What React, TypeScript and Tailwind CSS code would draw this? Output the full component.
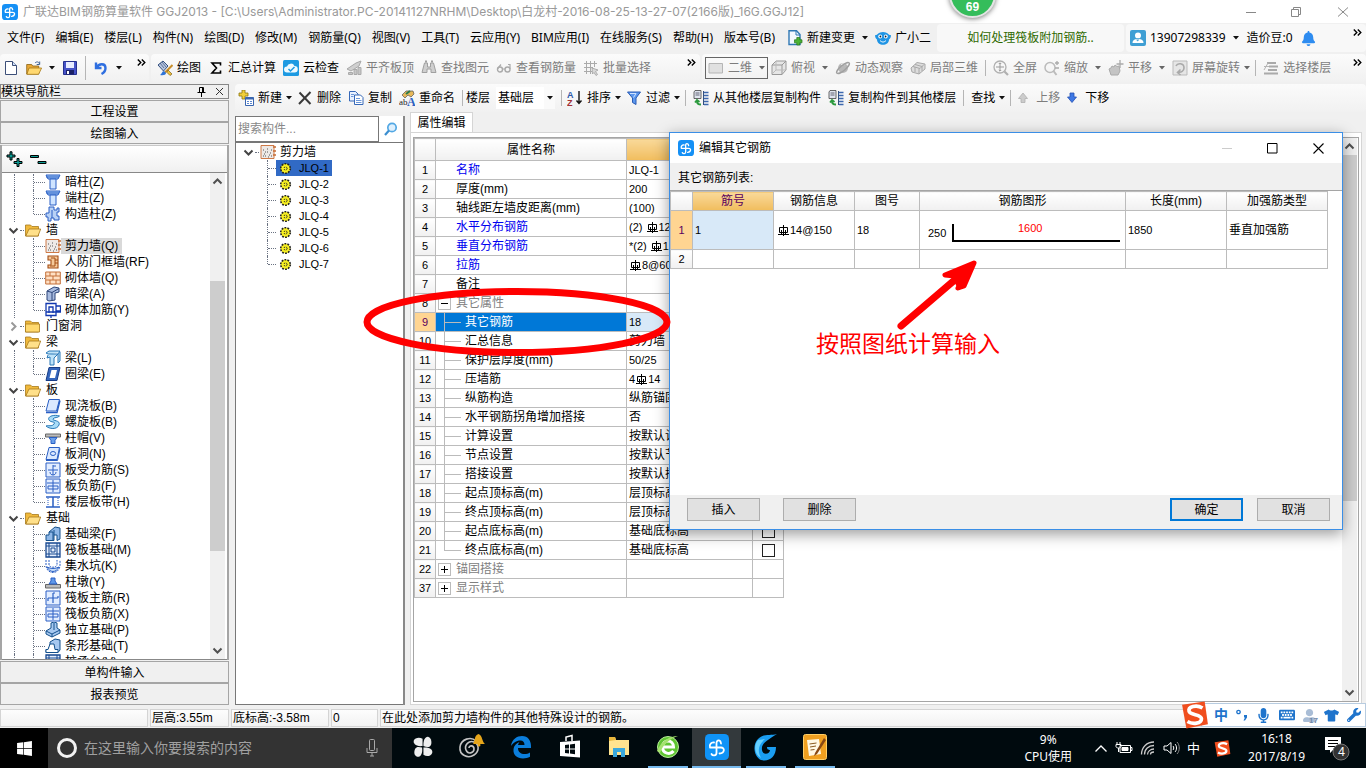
import React from "react";
import { FaBell, FaEdge, FaKeyboard, FaMicrophone, FaTshirt, FaWindows, FaWrench, FaUserAlt } from "react-icons/fa";

type P = { children?: React.ReactNode };

/* ---------- small glyphs ---------- */

const Caret = ({ c = "#111" }: { c?: string }) => (
  <svg width="6" height="4" viewBox="0 0 6 4" className="shrink-0"><path d="M0 0h6L3 3.6z" fill={c} /></svg>
);
const More = () => (
  <svg width="9" height="7" viewBox="0 0 9 7" className="mb-3 shrink-0" fill="none" stroke="#000" strokeWidth="1.4"><path d="M.8.5l3 3-3 3M4.8.5l3 3-3 3" /></svg>
);
const Chevron = ({ open = true }: { open?: boolean }) => (
  <svg width="11" height="11" viewBox="0 0 11 11" className="shrink-0" fill="none" stroke={open ? "#444" : "#999"} strokeWidth="2">
    {open ? <path d="M1.5 3.5l4 4 4-4" /> : <path d="M3.5 1.5l4 4-4 4" />}
  </svg>
);
const ScrollArrow = ({ up = false }: { up?: boolean }) => (
  <svg width="15" height="17" viewBox="0 0 15 17" fill="none" stroke="#505050" strokeWidth="2" className="shrink-0">
    {up ? <path d="M3.5 10.5l4-4 4 4" /> : <path d="M3.5 6.5l4 4 4-4" />}
  </svg>
);
const Rebar = () => (
  <svg width="13" height="11" viewBox="0 0 13 11" className="inline-block shrink-0 align-[-2px]" fill="none" stroke="#000" strokeWidth="1">
    <path d="M6.500 0v11M2.500 2.500h8v5h-8zM1 9.500h11M4.500 5v4M8.500 5v4" />
  </svg>
);
const LogoMark = ({ w }: { w: number }) => (
  <path d="M16 8.500c-.5-4-4.500-4-4.500-.5v10c0 3-4 3-5 1M5 12.500h11c4 0 4 5.500-1.500 6M5 12.500c-1-3 1.500-5.500 4-5" fill="none" stroke="#fff" strokeWidth={w} strokeLinecap="round" />
);
const AppLogo = () => (
  <svg width="16" height="16" viewBox="0 0 24 24" className="shrink-0">
    <rect width="24" height="24" rx="5" fill="#1590f5" />
    <LogoMark w={2} />
  </svg>
);

/* ---------- toolbar icons ---------- */

const Svg = ({ children, w = 16 }: P & { w?: number }) => (
  <svg width={w} height={w} viewBox="0 0 16 16" fill="none" className="shrink-0">{children}</svg>
);
const NewFile = () => <Svg><path d="M2.500 1.500h7l4 4v9h-11z" fill="#fff" stroke="#3c4f78" /><path d="M9.500 1.500v4h4" stroke="#3c4f78" fill="#cfe0fa" /></Svg>;
const OpenFile = () => <Svg><path d="M.7 4.500h5l1 1.500h6v8H.7z" fill="#e8a735" stroke="#8a6212" strokeWidth=".8" /><path d="M3 8h12.600l-3 6.300H.9z" fill="#ffd870" stroke="#a67817" strokeWidth=".8" /><path d="M9 3c2-2 4-1 4.500 1M13.700 1.500v3h-3" stroke="#3d6296" /></Svg>;
const Save = () => <Svg><path d="M1.500 1.500h13v13h-13z" fill="#4653c8" stroke="#26308e" /><path d="M4 2h8v6H4z" fill="#e8ecff" /><path d="M4 10h8v4.500H4z" fill="#1b2268" /><path d="M5 11h2v3H5z" fill="#fff" /></Svg>;
const Undo = () => <Svg><path d="M3 2.500v5.500h5.500M3.500 7.500C6 3 12.500 3 12.500 8c0 3-2 5-4 6" stroke="#2f6fe0" strokeWidth="2.400" /></Svg>;
const Paint = () => <Svg><path d="M1 5l5-4 5 5-4.500 5z" fill="#b7c4de" stroke="#34507e" /><path d="M3 3l4 5M5 2l4 5" stroke="#34507e" strokeWidth=".7" /><path d="M15.500 5L8 12.500" stroke="#c88e2c" strokeWidth="2" /><path d="M7 11c-2 0-2 3-4 4 3 .6 6 0 6-2z" fill="#2e74d8" /><path d="M11 10l4 4-2 1.500-3-3z" fill="#f0c23c" stroke="#80601a" strokeWidth=".7" /></Svg>;
const Sigma = () => <Svg><path d="M12.500 5.500V3H4l4.500 5L4 13h8.500v-2.500" stroke="#000" strokeWidth="1.600" /></Svg>;
const Cloud = () => <Svg><rect width="16" height="16" rx="1.500" fill="#1d9ae2" /><path d="M4 12.500a3 3 0 010-6 4 4 0 017.500-.5 3.200 3.200 0 010 6.500z" fill="#eefaff" /><path d="M5.500 9l2 2 4-4" stroke="#1d9ae2" strokeWidth="1.500" /></Svg>;
const AlignTop = () => <Svg><path d="M1 9l9-6 5-2-2 5-8 5z" fill="#d0d0d0" stroke="#a8a8a8" /><path d="M2.500 12.500h4v2h-4zM8 9.500h3v5H8zM12 7.500h3v7h-3z" fill="#c6c6c6" stroke="#aaa" /></Svg>;
const Binoc = () => <Svg><path d="M3.500 3h3v4h3V3h3l2.500 9.500h-5V9H6v3.500H1z" fill="#cfcfcf" stroke="#a0a0a0" /><path d="M4 1.500h2M10 1.500h2" stroke="#a0a0a0" strokeWidth="2" /></Svg>;
const Glasses = () => <Svg><circle cx="4" cy="9.500" r="2.500" stroke="#aaa" strokeWidth="1.400" /><circle cx="11.500" cy="9.500" r="2.500" stroke="#aaa" strokeWidth="1.400" /><path d="M6.500 9H9M1.700 8.500L5 4.500M14 9V4.500h-2" stroke="#aaa" strokeWidth="1.200" /></Svg>;
const Batch = () => <Svg><path d="M1 3.500h13M1 7.500h9M1 11.500h8M3.500 1v13M7.500 1v13M11.500 1v6" stroke="#aaa" /><path d="M9 8l6 2-2.500 1.500 2 3-1.500 1-2-3L9.500 14z" fill="#d8d8d8" stroke="#a0a0a0" strokeWidth=".8" /></Svg>;
const Plane2D = () => <Svg><path d="M1 3.500h13.500v9.500H1z" fill="#e0e0e0" stroke="#b5b5b5" /></Svg>;
const Cube = () => <Svg><path d="M1 5l4-4h10v9l-4 4.500H1zM1 5h10v9.500M11 5l4-4" fill="#e6e6e6" stroke="#999" /><path d="M5 1v9h10M5 10l-4 4" stroke="#bbb" /></Svg>;
const Orbit = () => <Svg><circle cx="8" cy="8" r="5" fill="#b8b8b8" /><path d="M6 4.500a4 4 0 014 0" stroke="#eee" strokeWidth="1.500" /><ellipse cx="8" cy="8" rx="8" ry="2.500" transform="rotate(-40 8 8)" stroke="#a0a0a0" strokeWidth="1.400" /></Svg>;
const Local3D = () => <Svg><path d="M1 8l6-5.500 8 1.500v5l-6 5-7-2z" fill="#ddd" stroke="#a8a8a8" /><path d="M3 6.500l7 2 4-4M5 4.500l7 2M9 14V8.500M5 12l0-5M12 11V6" stroke="#a8a8a8" /></Svg>;
const FullView = () => <Svg><circle cx="7" cy="7" r="6" stroke="#b0b0b0" strokeWidth="1.300" /><path d="M7 3v8M3 7h8M5.800 4L7 2.800 8.200 4M5.800 10L7 11.200 8.200 10" stroke="#999" /><path d="M11.500 11.500L15 15" stroke="#b0b0b0" strokeWidth="2.200" /></Svg>;
const Zoom = () => <Svg><circle cx="6" cy="7.500" r="5" stroke="#bbb" strokeWidth="1.500" /><path d="M9.500 11l3 4" stroke="#bbb" strokeWidth="2" /><path d="M13 1v4M11 3h4M11 8h4" stroke="#aaa" strokeWidth="1.300" /></Svg>;
const Pan = () => <Svg><path d="M3 15l-2-6 2-1 1-2 2 1 1-2 2 1.500L11 6l1 5-2 4z" fill="#c4c4c4" stroke="#aaa" /><path d="M12 0v8M8.500 4h7" stroke="#aaa" strokeWidth="1.300" /></Svg>;
const Rotate = () => <Svg><path d="M1 1h14v14H1z" fill="#e6e6e6" stroke="#bbb" /><path d="M4 6c1.500-3.500 8-3 8 2 0 3-3 4.500-5.500 4M8.500 9.500l-3 3 3 2.500" stroke="#aaa" strokeWidth="1.600" /></Svg>;
const PickFloor = () => <Svg><path d="M4 3h9M6 6.500h9M5 10h9M1 13.500h14" stroke="#aaa" strokeWidth="1.800" /><path d="M1 6.500h5M1 10l4-7" stroke="#b5b5b5" /></Svg>;
const NewComp = () => <Svg><path d="M4 0h3v3h3v3H7v3H4V6H1V3h3z" fill="#f0cf3a" stroke="#8a7410" strokeWidth=".8" /><path d="M7.500 7.500h8v8h-8z" fill="#fff" stroke="#3a66b0" /><path d="M7.500 8.500h8" stroke="#3a66b0" strokeWidth="2" /><path d="M9 11.500h2M12 11.500h2M9 13.500h2M12 13.500h2" stroke="#5a86d0" /></Svg>;
const Cross = () => <Svg><path d="M2.500 2.500l11 11.500M13.500 2l-11.500 12" stroke="#3a3a3a" strokeWidth="2" /></Svg>;
const Copy = () => <Svg><path d="M1.500 1.500h6l2.500 2.500v7H1.500z" fill="#eaf2ff" stroke="#3769b8" /><path d="M6.500 5h6l2.500 2.500v7H6.500z" fill="#fff" stroke="#3769b8" /><path d="M8 8.500h4M8 10.500h5.500M8 12.500h5.500M3 4.500h3M3 6.500h2.500" stroke="#6b97da" /></Svg>;
const Rename = () => (
  <svg width="16" height="16" viewBox="0 0 16 16" className="shrink-0"><path d="M3 5l4-4h7l1 3-3 3-3-2-3 3z" fill="#e7b85a" stroke="#555" strokeWidth=".7" /><path d="M7 4l4-3" stroke="#2c7a4a" strokeWidth="2" /><text x="0" y="15" fontSize="9" fontFamily="Liberation Serif" fill="#222">ab</text><text x="8" y="15.500" fontSize="12" fontWeight="bold" fontFamily="Liberation Serif" fill="#2b60c0">A</text></svg>
);
const SortAZ = () => (
  <svg width="16" height="16" viewBox="0 0 16 16" className="shrink-0"><text x="0" y="7.500" fontSize="9" fontWeight="bold" fontFamily="Liberation Sans" fill="#2c57a8">A</text><text x="0" y="15.500" fontSize="9" fontWeight="bold" fontFamily="Liberation Sans" fill="#a02f34">Z</text><path d="M12 1v12M9.500 10.500l2.500 3 2.500-3" stroke="#111" strokeWidth="1.400" fill="none" /></svg>
);
const Filter = () => <Svg><path d="M1.500 2h13L10 8v6.500l-3.500-2V8z" fill="#5b97ee" stroke="#2a5bb4" /><path d="M4 3.500h6l-2.500 4" stroke="#cfe2ff" /></Svg>;
const FloorCopy = () => <Svg><path d="M2 .5h6v8H1V2z" fill="#dfe4ee" stroke="#444" strokeWidth=".8" /><path d="M2.500 3h4M2.500 5h4" stroke="#445" strokeWidth=".8" /><path d="M11 2.500h4.500M11 5.500h4.500M11 8.500h4.500M11 11.500h4.500M11 14.500h4.500" stroke="#3d68ae" strokeWidth="1.400" /><path d="M10.500 1v14" stroke="#33507e" /><path d="M8 14.500c-3 0-4-1-4-3M2 12.500l2-2.500 2.500 2" stroke="#2c9a3e" strokeWidth="1.800" /></Svg>;
const Arrow = ({ down = false }: { down?: boolean }) => (
  <svg width="10" height="12" viewBox="0 0 10 12" className="shrink-0">
    {down ? <path d="M3 1h4v4h2.500L5 10.500.5 5H3z" fill="#3e78e4" stroke="#2550b4" strokeWidth=".8" /> : <path d="M3 10.500h4v-4h2.500L5 1 .5 6.500H3z" fill="#ccc" stroke="#b0b0b0" strokeWidth=".8" />}
  </svg>
);
const ChangeDoc = () => <Svg><path d="M2 .8h7.500L13 4.500v10H2z" fill="#f3f9ff" stroke="#2f78b4" strokeWidth="1.400" /><path d="M9 1v4h4" stroke="#2f78b4" /><path d="M9.800 7.500h3v2.300H15v3h-2.200V15h-3v-2.200H7.500v-3h2.300z" fill="#4cb434" stroke="#23741a" strokeWidth=".7" /></Svg>;
const Owl = () => <Svg><path d="M0 5c2 1 3-3 8-3s6 4 8 3c0 3-1.500 4-2 4.500 0 7-12 7-12 0C1.500 9 0 8 0 5z" fill="#1f94e4" /><circle cx="5.200" cy="6.500" r="1.900" fill="#fff" /><circle cx="10.800" cy="6.500" r="1.900" fill="#fff" /><circle cx="5.400" cy="6.500" r=".9" fill="#123" /><circle cx="10.600" cy="6.500" r=".9" fill="#123" /><path d="M5 10.500c2 2 4 2 6 0" stroke="#fff" /></Svg>;
const UserTile = () => <Svg><rect width="16" height="16" rx="2" fill="#3f9fd4" /><circle cx="8" cy="5.500" r="3" fill="#fff" /><path d="M2.500 13c0-3.500 3-4 5.500-4s5.500.5 5.500 4z" fill="#fff" /><path d="M8 8v3l-1.500-1" stroke="#3f9fd4" /></Svg>;

/* ---------- tree icons ---------- */

const Folder = ({ open = true }: { open?: boolean }) => (
  <svg width="16" height="14" viewBox="0 0 16 14" className="shrink-0">
    <path d="M.5 2h5l1.500 1.500h6.500V13H.5z" fill="#f0b93c" stroke="#a77a1c" strokeWidth=".8" />
    {open ? <path d="M4 6h11.700L13 13H.8z" fill="#ffe08a" stroke="#a77a1c" strokeWidth=".8" /> : <path d="M.5 5h14v8H.5z" fill="#ffd96f" stroke="#a77a1c" strokeWidth=".8" />}
  </svg>
);
const WallIcon = () => (
  <Svg><path d="M1 1.500h13v13H1z" fill="#eee9e6" stroke="#c86c34" strokeWidth=".9" /><path d="M4 10h1M7 8h1M5 12h1M9 11h1M11 6h1M10 9h1M3 12h1M8 13h1M7 5h1M11 12h1M3 6h1M5 8h1" stroke="#555" /><path d="M13 3h3M13 7h3M13 11h3" stroke="#c86c34" strokeWidth="1.500" /></Svg>
);
const blue = "#2a5fc4";
const nodeIcons: Record<string, React.ReactNode> = {
  col: <Svg><path d="M1 1h14l-2 4H3z" fill="#9cc4f4" stroke={blue} /><path d="M5 5h6v10H5z" fill="#cfe4ff" stroke={blue} /><path d="M1 3h13" stroke={blue} /></Svg>,
  ccol: <Svg><path d="M4 1h5v3h3V2h2v4h-2v4h2v4H9v-2H6v3H3v-4H1V7h3z" fill="#b9d2f6" stroke={blue} /><path d="M7 4v8" stroke={blue} /></Svg>,
  wall: <WallIcon />,
  door: <Svg><path d="M3 2h10v12H3v-3h3V6H3z" fill="#f5c99a" stroke="#a34c14" strokeWidth="1.100" /><path d="M6 4h4v8H5M10 6h3M10 9h3" stroke="#a34c14" /></Svg>,
  brick: <Svg><path d="M.7 2h14.600v12H.7z" fill="#ffe0c4" stroke="#c4713a" /><path d="M1 6h14M1 10h14M5 2v4M11 2v4M8 6v4M5 10v4M11 10v4" stroke="#c4713a" /></Svg>,
  hbeam: <Svg><path d="M2 5l7-4 5 1v4l-4 1v7l-6 1-2-1z" fill="#a9bce0" stroke="#2c4478" /><path d="M2 5l5 1.500 7-4M7 6.500V14" stroke="#2c4478" /></Svg>,
  brebar: <Svg><path d="M1 1.500h10v12H1zM11 4h4.500v5H11M4 11V5h4v6M1 10h15M6 13v3" stroke="#1238b0" strokeWidth="1.300" /></Svg>,
  beam: <Svg><path d="M1 3l3-2h11l-2 3H3zM3 5l-1 3 3-1v8h4V8l4-4v9l2-2V2" fill="#bfe3f8" stroke="#2a78b8" /></Svg>,
  ring: <Svg><path d="M4 1.500h11l-3 13H1z" fill="#3566bc" stroke="#173c86" /><path d="M6.500 4h5.500l-2 8H4.500z" fill="#fff" /></Svg>,
  slab: <Svg><path d="M4 1.500h10.500l-3 11.500H1z" fill="#dbe9ff" stroke={blue} /><path d="M1 14.500h11l3-12" stroke={blue} strokeWidth="1.400" /></Svg>,
  spiral: <Svg><path d="M14.500 2C8 0 2 3 4 6s7 1 5 4-6 1-8 2c3 3 11 4 13-1s-7-4-6-6 5-1 6.500-3z" fill="#a8dcf8" stroke="#2878b8" /></Svg>,
  cap: <Svg><path d="M.5 4h15v3H.5z" fill="#bbb" stroke="#666" /><path d="M4 7.500h8l-2 3v3H6v-3z" fill="#6ba0ea" stroke={blue} /></Svg>,
  hole: <Svg><path d="M4 1.500h10.500l-2.500 12H1z" fill="#dbe9ff" stroke={blue} /><path d="M1 14.500h11.500l2.500-12" stroke={blue} /><ellipse cx="8" cy="7.500" rx="2.600" ry="2" stroke={blue} /></Svg>,
  srebar: <Svg><path d="M1 1h14v14H1z" fill="#e2edff" stroke={blue} /><path d="M8 3v10M3 8h10M8 4h3M11 10c0 4-6 4-6 0" stroke={blue} /></Svg>,
  nrebar: <Svg><path d="M1 1h14v14H1z" fill="#e2edff" stroke={blue} /><path d="M8 2v12M2 5h12M3 11V8h10v3M3 11h10" stroke={blue} /></Svg>,
  strip: <Svg><path d="M1 3h14M1 13h14M8 3v10" stroke={blue} strokeWidth="1.500" /><path d="M3 4v8M13 4v8" stroke={blue} strokeDasharray="1 1" /></Svg>,
  fbeam: <Svg><path d="M1 14.500V9h3V6l6-5 5 1v11l-3 1.500V9H9v5.500z" fill="#8fb8e8" stroke="#14508c" /><path d="M4 6h4v8M9 4v5" stroke="#14508c" /></Svg>,
  raft: <Svg><path d="M1 1h14v14H1z" fill="#e4eefc" stroke="#174890" strokeWidth="1.300" /><path d="M4 1v14M12 1v14M1 4h14M1 12h14M6 6h4v4H6z" stroke="#174890" /></Svg>,
  pit: <Svg><path d="M1 2v5c0 10 14 10 14 0V2M4 2v5c1 3 7 3 8 0V2" stroke={blue} strokeDasharray="2 1" /><path d="M2 9c3 6 9 6 12 0-4 2-8 2-12 0z" fill="#c4dcf8" stroke={blue} /></Svg>,
  pier: <Svg><path d="M.5 10.500h15v3.500H.5z" fill="#bbb" stroke="#666" /><path d="M4 10h8l-2-3V4H6v3z" fill="#5f98e8" stroke={blue} /></Svg>,
  mrebar: <Svg><path d="M1 1h14v14H1z" fill="#e2edff" stroke={blue} /><path d="M8 3v10M3 8h10M8 3h2M3 8v3M13 8V6" stroke={blue} strokeWidth="1.200" /></Svg>,
  indep: <Svg><path d="M1 9l5-3V1l3-1 3 1v5l3 2v3l-8 4-6-3z" fill="#a6c8f0" stroke="#14508c" /><path d="M1 9l6 3 8-4M9 1v7M7 12v3" stroke="#14508c" /></Svg>,
  bar: <Svg><path d="M1 14.500v-3h2l2-4V4l5-3 5 1v10l-2 2.500z" fill="#a6c8f0" stroke="#14508c" /><path d="M5 6h4l1 5.500h3v3H1v-3h2z" fill="#fff" stroke="#14508c" /></Svg>,
};

type Node = { t: string; icon?: string; closed?: boolean; last?: boolean; sel?: boolean };
const navNodes: Node[] = [
  { t: "暗柱(Z)", icon: "col" }, { t: "端柱(Z)", icon: "col" }, { t: "构造柱(Z)", icon: "ccol", last: true },
  { t: "墙" },
  { t: "剪力墙(Q)", icon: "wall", sel: true }, { t: "人防门框墙(RF)", icon: "door" }, { t: "砌体墙(Q)", icon: "brick" }, { t: "暗梁(A)", icon: "hbeam" }, { t: "砌体加筋(Y)", icon: "brebar", last: true },
  { t: "门窗洞", closed: true },
  { t: "梁" },
  { t: "梁(L)", icon: "beam" }, { t: "圈梁(E)", icon: "ring", last: true },
  { t: "板" },
  { t: "现浇板(B)", icon: "slab" }, { t: "螺旋板(B)", icon: "spiral" }, { t: "柱帽(V)", icon: "cap" }, { t: "板洞(N)", icon: "hole" }, { t: "板受力筋(S)", icon: "srebar" }, { t: "板负筋(F)", icon: "nrebar" }, { t: "楼层板带(H)", icon: "strip", last: true },
  { t: "基础" },
  { t: "基础梁(F)", icon: "fbeam" }, { t: "筏板基础(M)", icon: "raft" }, { t: "集水坑(K)", icon: "pit" }, { t: "柱墩(Y)", icon: "pier" }, { t: "筏板主筋(R)", icon: "mrebar" }, { t: "筏板负筋(X)", icon: "nrebar" }, { t: "独立基础(P)", icon: "indep" }, { t: "条形基础(T)", icon: "bar" }, { t: "桩承台(V)", icon: "raft" },
];

const NavRow = ({ n }: { n: Node }) =>
  n.icon ? (
    <li className="flex h-4 items-center leading-4">
      <span className="ml-3 h-4 w-px border-l border-dotted border-gray-500" />
      <span className={n.last ? "ml-[18px] h-2 w-px self-start border-l border-dotted border-gray-500" : "ml-[18px] h-4 w-px border-l border-dotted border-gray-500"} />
      <span className="w-[11px] border-t border-dotted border-gray-500" />
      {nodeIcons[n.icon]}
      <span className={n.sel ? "bg-[#d9d9d9] px-1" : "px-1"}>{n.t}</span>
    </li>
  ) : (
    <li className="flex h-4 items-center leading-4">
      <span className="ml-[6px] flex"><Chevron open={!n.closed} /></span>
      <span className="mx-px w-[4px] border-t border-dotted border-gray-500" />
      <Folder open={!n.closed} />
      <span className="ml-[5px]">{n.t}</span>
    </li>
  );

/* ---------- toolbar pieces ---------- */

const Bar = ({ children, grow = false }: P & { grow?: boolean }) => (
  <div className={grow ? "flex h-[28px] min-w-0 flex-1 items-center gap-[7px] rounded-sm bg-gradient-to-b from-[#fbfbfb] to-[#f1f1f1] px-[3px]" : "flex h-[28px] shrink-0 items-center gap-[7px] rounded-sm bg-gradient-to-b from-[#fbfbfb] to-[#f1f1f1] px-[3px]"}>{children}</div>
);
const Sep = () => <span className="h-4 w-px shrink-0 bg-[#b5b5b5]" />;
const Tool = ({ icon, t, off = false, caret, label, wide = false }: { icon?: React.ReactNode; t?: string; off?: boolean; caret?: "near" | "far"; label?: string; wide?: boolean }) => (
  <button type="button" aria-label={label} className={off ? "flex shrink-0 items-center gap-1 whitespace-nowrap text-[#7d7d7d]" : "flex shrink-0 items-center gap-1 whitespace-nowrap text-black"}>
    {icon}
    {t && <span className={wide ? "ml-1" : ""}>{t}</span>}
    {caret && <span className={caret === "far" ? "ml-[3px]" : "-mr-[2px]"}><Caret c={off ? "#666" : "#111"} /></span>}
  </button>
);

const menus = ["文件(F)", "编辑(E)", "楼层(L)", "构件(N)", "绘图(D)", "修改(M)", "钢筋量(Q)", "视图(V)", "工具(T)", "云应用(Y)", "BIM应用(I)", "在线服务(S)", "帮助(H)", "版本号(B)"];

/* ---------- property grid ---------- */

type Prop = { n: number; t: string; v?: React.ReactNode; kind: "top" | "key" | "group" | "leaf"; sel?: boolean; open?: boolean; check?: boolean; last?: boolean };
const props: Prop[] = [
  { n: 1, t: "名称", v: "JLQ-1", kind: "key" },
  { n: 2, t: "厚度(mm)", v: "200", kind: "top" },
  { n: 3, t: "轴线距左墙皮距离(mm)", v: "(100)", kind: "top" },
  { n: 4, t: "水平分布钢筋", v: <>(2) <Rebar />12</>, kind: "key" },
  { n: 5, t: "垂直分布钢筋", v: <>*(2) <Rebar />12</>, kind: "key" },
  { n: 6, t: "拉筋", v: <><Rebar />8@600</>, kind: "key" },
  { n: 7, t: "备注", kind: "top" },
  { n: 8, t: "其它属性", kind: "group", open: true },
  { n: 9, t: "其它钢筋", v: "18", kind: "leaf", sel: true },
  { n: 10, t: "汇总信息", v: "剪力墙", kind: "leaf" },
  { n: 11, t: "保护层厚度(mm)", v: "50/25", kind: "leaf" },
  { n: 12, t: "压墙筋", v: <>4<Rebar />14</>, kind: "leaf" },
  { n: 13, t: "纵筋构造", v: "纵筋锚固", kind: "leaf" },
  { n: 14, t: "水平钢筋拐角增加搭接", v: "否", kind: "leaf" },
  { n: 15, t: "计算设置", v: "按默认计算", kind: "leaf" },
  { n: 16, t: "节点设置", v: "按默认节点", kind: "leaf" },
  { n: 17, t: "搭接设置", v: "按默认搭接", kind: "leaf" },
  { n: 18, t: "起点顶标高(m)", v: "层顶标高", kind: "leaf" },
  { n: 19, t: "终点顶标高(m)", v: "层顶标高", kind: "leaf" },
  { n: 20, t: "起点底标高(m)", v: "基础底标高", kind: "leaf", check: true },
  { n: 21, t: "终点底标高(m)", v: "基础底标高", kind: "leaf", check: true, last: true },
  { n: 22, t: "锚固搭接", kind: "group" },
  { n: 37, t: "显示样式", kind: "group" },
];

const PropName = ({ p }: { p: Prop }) => {
  if (p.kind === "leaf")
    return (
      <div className={p.sel ? "flex h-[18px] items-center bg-[#0078d7] text-white" : "flex h-[18px] items-center"}>
        <span className={p.last ? "ml-2 h-[10px] w-px self-start bg-[#bbb]" : "ml-2 h-full w-px bg-[#bbb]"} />
        <span className="mr-1 h-px w-4 bg-[#bbb]" />
        {p.t}
      </div>
    );
  if (p.kind === "group")
    return (
      <div className="flex h-[18px] items-center text-[#808080]">
        <button type="button" aria-label={p.t} className="ml-[2px] mr-[5px] flex size-[13px] items-center justify-center border border-[#bbb] bg-white">
          <svg width="9" height="9" viewBox="0 0 9 9" stroke="#000"><path d={p.open ? "M1 4.500h7" : "M1 4.500h7M4.500 1v7"} /></svg>
        </button>
        {p.t}
      </div>
    );
  return <div className={p.kind === "key" ? "flex h-[18px] items-center pl-5 text-[#0000f0]" : "flex h-[18px] items-center pl-5"}>{p.t}</div>;
};

const cell = "border border-[#bcbcbc] p-0";
const headCell = "border border-[#bcbcbc] bg-gradient-to-b from-white to-[#f0f0f0] p-0 text-center font-normal";

const PropTable = () => (
  <table className="w-[370px] table-fixed border-collapse text-[12px] leading-[18px]">
    <colgroup><col className="w-[21px]" /><col className="w-[191px]" /><col className="w-[126px]" /><col className="w-[31px]" /></colgroup>
    <thead>
      <tr className="h-[22px]">
        <th className={headCell} /><th className={headCell}>属性名称</th>
        <th className="border border-[#bcbcbc] bg-gradient-to-b from-[#f9d999] to-[#f1bd5c] p-0" /><th className={headCell} />
      </tr>
    </thead>
    <tbody>
      {props.map((p) => (
        <tr key={p.n} className="h-[19px]">
          <th className={p.sel ? "border border-[#bcbcbc] bg-[#ffd592] p-0 text-center text-[11px] font-normal text-[#5a0060]" : "border border-[#bcbcbc] bg-gradient-to-b from-white to-[#f0f0f0] p-0 text-center text-[11px] font-normal"}>{p.n}</th>
          <td className={cell}><PropName p={p} /></td>
          <td className={p.sel ? "overflow-hidden whitespace-nowrap border border-[#bcbcbc] bg-[#d8e9f8] p-0 pl-[2px]" : "overflow-hidden whitespace-nowrap border border-[#bcbcbc] p-0 pl-[2px]"}>
            <div className={typeof p.v === "string" && /[\u4e00-\u9fff]/.test(p.v) ? "h-[18px]" : "h-[18px] text-[11px]"}>{p.v}</div>
          </td>
          <td className={cell}>
            {p.check && <input type="checkbox" aria-label={p.t} className="mx-auto block size-[13px] appearance-none border border-[#222] bg-white" />}
          </td>
        </tr>
      ))}
    </tbody>
  </table>
);

/* ---------- dialog ---------- */

const dlgBtn = "h-[23px] w-[73px] border border-[#adadad] bg-[#e1e1e1] text-center";
const Dialog = () => (
  <section role="dialog" aria-label="编辑其它钢筋" className="absolute left-[669px] top-[132px] flex h-[398px] w-[674px] flex-col border border-[#3a8ee6] bg-[#f0f0f0] text-[12px] shadow-[0_4px_14px_rgba(0,0,0,0.4)]">
    <header className="flex h-[30px] shrink-0 items-center bg-white pl-2">
      <AppLogo />
      <h2 className="ml-[5px] flex-1 font-['Noto_Sans','Noto_Sans_CJK_SC',sans-serif]">编辑其它钢筋</h2>
      <div className="flex items-center gap-[35px] pr-[18px]">
        <svg width="10" height="11" viewBox="0 0 10 11"><path d="M0 5.500h10" stroke="#ccc" /></svg>
        <svg width="11" height="11" viewBox="0 0 11 11"><path d="M.5.5h9.500v9.500H.5z" fill="none" stroke="#000" /></svg>
        <svg width="11" height="11" viewBox="0 0 11 11"><path d="M.5.5l10 10M10.500.5l-10 10" stroke="#000" strokeWidth="1.100" /></svg>
      </div>
    </header>
    <p className="h-[27px] shrink-0 pl-2 leading-[30px]">其它钢筋列表:</p>
    <div className="min-h-0 flex-1 border-t border-[#a5a5a5] bg-white">
      <table className="w-[657px] table-fixed border-collapse leading-[18px]">
        <colgroup><col className="w-[22px]" /><col className="w-[81px]" /><col className="w-[81px]" /><col className="w-[65px]" /><col className="w-[206px]" /><col className="w-[101px]" /><col className="w-[101px]" /></colgroup>
        <thead>
          <tr className="h-[19px]">
            <th className={headCell} />
            <th className="border border-[#bcbcbc] bg-gradient-to-b from-[#f9d999] to-[#f1bd5c] p-0 text-center font-normal text-[#5a0060]">筋号</th>
            {["钢筋信息", "图号", "钢筋图形", "长度(mm)", "加强筋类型"].map((h) => <th key={h} className={headCell}>{h}</th>)}
          </tr>
        </thead>
        <tbody>
          <tr className="h-[39px]">
            <th className="border border-[#bcbcbc] bg-[#ffd592] p-0 text-center text-[11px] font-normal text-[#5a0060]">1</th>
            <td className="border border-[#bcbcbc] bg-[#d8e9f8] pl-[2px] text-[11px]">1</td>
            <td className="border border-[#bcbcbc] pl-[3px] text-[11px]"><Rebar />14@150</td>
            <td className="border border-[#bcbcbc] pl-[2px] text-[11px]">18</td>
            <td className="border border-[#bcbcbc] p-0">
              <svg width="204" height="38" viewBox="0 0 204 38" className="block" fontFamily="Liberation Sans" fontSize="11">
                <text x="8" y="26">250</text><text x="98" y="21" fill="#f00">1600</text>
                <path d="M33 13v17h167" fill="none" stroke="#000" strokeWidth="2" />
              </svg>
            </td>
            <td className="border border-[#bcbcbc] pl-[2px] text-[11px]">1850</td>
            <td className="border border-[#bcbcbc] pl-[2px]">垂直加强筋</td>
          </tr>
          <tr className="h-[19px]">
            <th className={headCell}><span className="text-[11px]">2</span></th>
            <td className={cell} /><td className={cell} /><td className={cell} /><td className={cell} /><td className={cell} /><td className={cell} />
          </tr>
        </tbody>
      </table>
    </div>
    <footer className="flex h-[34px] shrink-0 items-start pl-[17px] pr-3 pt-[3px]">
      <button type="button" className={dlgBtn}>插入</button>
      <button type="button" className={dlgBtn + " ml-[23px]"}>删除</button>
      <button type="button" className="ml-auto h-[23px] w-[73px] border-2 border-[#0078d7] bg-[#e1e1e1] text-center leading-[18px]">确定</button>
      <button type="button" className={dlgBtn + " ml-[14px]"}>取消</button>
    </footer>
  </section>
);

/* ---------- taskbar ---------- */

const TaskIcon = ({ children, active = false, run = false, label }: P & { active?: boolean; run?: boolean; label: string }) => (
  <button type="button" aria-label={label} className={active ? "flex h-full w-[49px] flex-col items-center bg-[#33393c]" : "flex h-full w-[49px] flex-col items-center"}>
    <span className="flex flex-1 items-center">{children}</span>
    <span className={active ? "h-[2px] w-full bg-[#76b9ed]" : run ? "h-[2px] w-10 bg-[#76b9ed]" : "h-[2px]"} />
  </button>
);

const SogouS = ({ s = 26 }: { s?: number }) => (
  <svg width={s} height={s} viewBox="0 0 26 26" className="shrink-0"><path d="M1 3.500L22 .5l3 21L5 25.500z" fill="#f04e1e" /><path d="M20 6.500C14 3 6.500 5.500 7.500 9.500s11.500 2.500 11.500 7-8 5.500-13 2.500" fill="none" stroke="#fff" strokeWidth="3.400" /></svg>
);

const Taskbar = () => (
  <footer className="flex h-10 shrink-0 items-center bg-[#000a0e] font-['Noto_Sans','Noto_Sans_CJK_SC',sans-serif] text-[12px] text-white">
    <button type="button" aria-label="开始" className="flex h-full w-12 items-center justify-center bg-black"><FaWindows size={17} /></button>
    <label className="flex h-full w-[344px] items-center bg-[#333] pl-2 pr-[14px]">
      <svg width="22" height="22" viewBox="0 0 22 22"><circle cx="11" cy="11" r="8.500" fill="none" stroke="#f2f2f2" strokeWidth="3" /></svg>
      <input aria-label="搜索" placeholder="在这里输入你要搜索的内容" className="ml-[6px] min-w-0 flex-1 bg-transparent text-[14px] outline-none placeholder:text-[#a0a0a0]" />
      <svg width="12" height="18" viewBox="0 0 12 18" fill="none" stroke="#aaa"><rect x="3.500" y=".5" width="5" height="11" rx="1" /><path d="M1 9v4.500h10V9M6 13.500V17M4 17h4" /></svg>
    </label>
    <nav className="ml-[6px] flex h-full">
      <TaskIcon label="四叶">
        <svg width="22" height="26" viewBox="0 0 24 26" fill="#eee"><path d="M11.500 12C4 13 1 9 2 6s6-4 9.500-2z" /><path d="M12.500 12C12 5 15 1 18 2s4 6 2.500 9-5 2-8 1z" /><path d="M12.500 13.500C20 13 23 16 22 19.500s-6 4.500-9.500 2z" /><path d="M11 13.500c1 7-2 11-5.500 10S2 18 3.500 15s4.500-2 7.500-1.500z" /></svg>
      </TaskIcon>
      <TaskIcon label="浏览器">
        <svg width="30" height="30" viewBox="0 0 30 30" fill="none"><path d="M19 9c-5-5-15-2-16 6s8 12 14 8 5-11 0-13-10 3-8 8 8 3 8-1-5-4-5-1" stroke="#c4c4c4" strokeWidth="1.600" /><path d="M16 12c2-2 1-9 5.500-10 4 1 3.500 8 6.500 10z" fill="#e5a51a" /><circle cx="22" cy="13" r="1.500" fill="#e5a51a" /></svg>
      </TaskIcon>
      <TaskIcon label="Edge">
        <svg width="22" height="24" viewBox="0 0 22 24"><path d="M1 11C2 4 7 1 12 1c6 0 9.500 4.500 9 12H8c0 4 3 6 6.500 6 2 0 4-.5 5.500-1.500v4.300C18 23 15.500 23.500 13 23.500 7 23.500 3 20 3.500 14.500 4 10 7 8 9.500 7 8.500 8.500 8 9.500 8 10h6.500c0-3-1.500-4.500-4-4.500C6 5.500 3 8 1 11z" fill="#0b7edc" /></svg>
      </TaskIcon>
      <TaskIcon label="商店">
        <svg width="22" height="26" viewBox="0 0 22 26"><path d="M1 8l20-1.500v17L1 22z" fill="#fff" /><path d="M7 7V3l6-1.500V7" fill="none" stroke="#fff" strokeWidth="1.500" /><path d="M6 11l4-.5v4H6zM11 10.400l5-.6v4.700h-5zM6 15.500h4v4l-4-.5zM11 15.500h5v4.700l-5-.6z" fill="#000a0e" /></svg>
      </TaskIcon>
      <TaskIcon label="文件夹">
        <svg width="22" height="22" viewBox="0 0 22 22"><path d="M1 1h6l1 3h13v15H1z" fill="#ffe48f" /><path d="M1 1h6l1 3-7 1z" fill="#e8b63c" /><path d="M5 21V12h12v9h-4v-5H9v5z" fill="#3aa8dc" /></svg>
      </TaskIcon>
      <TaskIcon label="安全浏览器" run>
        <svg width="24" height="26" viewBox="0 0 24 26"><circle cx="12" cy="13" r="10.500" fill="#5fc532" stroke="#b7ea9a" /><path d="M17.500 17c-3 4-11 3-11-4 0-8 11-8 11 0h-11" fill="none" stroke="#fff" strokeWidth="3" /><path d="M1 17C5 7 14 2 22 2c-7 2-15 8-18 17z" fill="#a4e26e" /></svg>
      </TaskIcon>
      <TaskIcon label="广联达" active>
        <svg width="24" height="26" viewBox="0 -1 24 26"><rect width="24" height="26" rx="4.500" fill="#0f93f7" y="-1" /><LogoMark w={1.8} /></svg>
      </TaskIcon>
      <TaskIcon label="G" run>
        <svg width="26" height="28" viewBox="0 0 26 28"><path d="M24 1c-7 2-13-1-19 5S1 24 8 27c8 2 15-3 15-13h-9c0 3 2 3 3 3 0 4-7 6-8 0C8 10 15 7 24 1z" fill="#1a9df0" /><path d="M5 7c-5 6-3 15 3 18-3-6-4-12 4-19z" fill="#65d0ff" /></svg>
      </TaskIcon>
      <TaskIcon label="编辑" run>
        <svg width="24" height="26" viewBox="0 0 24 26"><rect x=".5" y=".5" width="23" height="25" rx="2" fill="#f0a020" stroke="#ffcf66" /><path d="M4 6l12-1 2 15-12 2z" fill="#fff8e4" /><path d="M6.500 10l7-1M7 13l6-1M7.500 16l4-.5" stroke="#8a5a20" /><path d="M21 4l-9 15-1 3 3-2 9-14z" fill="#8a4a14" /></svg>
      </TaskIcon>
    </nav>
    <div className="ml-auto flex h-full items-center">
      <p className="mr-[22px] text-center leading-[17px]">9%<br />CPU使用</p>
      <div className="flex items-center gap-[7px]">
        <svg width="14" height="9" viewBox="0 0 14 9" fill="none" stroke="#fff" strokeWidth="1.300"><path d="M1.500 7.500L7 2l5.500 5.500" /></svg>
        <svg width="18" height="14" viewBox="0 0 18 14" fill="none" stroke="#fff"><path d="M5 4.500h10.500v7H5zM16 6.500h1v3h-1M1 3.500h5v2c0 2-5 2-5 0zM2 1v2.500M5 1v2.500M3.500 7v4" /><path d="M7 6.500h6v3H7z" fill="#fff" /></svg>
        <svg width="16" height="16" viewBox="0 0 16 16" fill="none" stroke="#ccc" strokeWidth="1.300"><path d="M1.500 14.500C1.500 7 7 2 14 2M4.500 14.500C4.500 9 8.500 5.500 14 5.500M7.500 14.500c0-3 3-5.500 6.500-5.500M10.500 14.500c0-1.500 1.500-2.500 3.500-2.500" /></svg>
        <svg width="17" height="14" viewBox="0 0 17 14" fill="none" stroke="#fff"><path d="M1 5h3l4-3.500v11L4 9H1zM10 5c1 1 1 3 0 4M12 3c2 2 2 6 0 8" /><path d="M14 1c3 3 3 9 0 12" stroke="#888" /></svg>
        <span className="text-[13px]">中</span>
      </div>
      <span className="ml-[14px] flex"><SogouS s={17} /></span>
      <p className="ml-[17px] text-center leading-[18px]">16:18<br />2017/8/19</p>
      <svg width="28" height="26" viewBox="0 0 28 26" className="ml-[19px] mr-[14px] shrink-0"><path d="M1 2h16v13H9l-3 3v-3H1z" fill="#fff" /><path d="M4 5.500h10M4 8.500h10M4 11.500h7" stroke="#000" /><circle cx="17" cy="17" r="8" fill="#333" stroke="#777" /><text x="14" y="21" fontSize="12" fill="#fff" fontFamily="Noto Sans">4</text></svg>
    </div>
  </footer>
);

const Gear = () => (
  <svg width="13" height="13" viewBox="0 0 13 13" className="shrink-0"><circle cx="6.500" cy="6.500" r="4.800" fill="#f8f020" stroke="#222" strokeWidth="1.600" strokeDasharray="1.800 1.200" /><circle cx="6.500" cy="6.500" r="1.600" fill="none" stroke="#222" strokeDasharray="1.500 1" /></svg>
);

const navBtn = "h-[22px] w-full shrink-0 border border-[#a5a5a5] bg-[#f0f0f0] text-center leading-[22px]";
const statusCell = "h-[18px] shrink-0 truncate border border-[#d4d4d4] bg-gradient-to-b from-[#fdfdfd] to-[#f2f2f2] pl-px leading-[16px]";

export default function App() {
  return (
    <div className="relative flex h-screen w-full flex-col overflow-hidden bg-[#f0f0f0] font-['Liberation_Sans','Noto_Sans_CJK_SC',sans-serif] text-[12px] leading-4 text-black">
      {/* title bar */}
      <header className="flex h-[23px] shrink-0 items-center bg-white pl-[2px] pr-[18px] font-['Inter','Noto_Sans_CJK_SC',sans-serif]">
        <AppLogo />
        <h1 className="ml-[5px] flex-1 truncate text-[#999]">广联达BIM钢筋算量软件 GGJ2013 - [C:\Users\Administrator.PC-20141127NRHM\Desktop\白龙村-2016-08-25-13-27-07(2166版)_16G.GGJ12]</h1>
        <svg width="104" height="12" viewBox="0 0 104 12" fill="none" stroke="#888"><path d="M2 6.500h10M47.500 3.500h7v7h-7zM49.500 3.500v-2h7v7h-2M94 1.500l10 9M104 1.500l-10 9" /></svg>
      </header>

      {/* menu bar and main toolbar */}
      <div className="shrink-0 font-['Noto_Sans','Noto_Sans_CJK_SC',sans-serif]">
        <div className="flex h-[30px] items-center">
          <nav className="flex gap-[11px] whitespace-nowrap pl-[7px]">
            {menus.map((m) => <button type="button" key={m}>{m}</button>)}
          </nav>
          <div className="ml-3 flex items-center gap-[7px]">
            <Tool icon={<ChangeDoc />} t="新建变更" caret="far" />
            <Tool icon={<Owl />} t="广小二" />
          </div>
          <div className="ml-auto flex items-center gap-[2px]">
            <div className="flex h-[28px] w-[187px] items-center justify-center rounded-sm bg-[#f8f8f8]"><a href="#help" className="text-[#2f6a00]">如何处理筏板附加钢筋..</a></div>
            <div className="flex h-[28px] w-[240px] items-center rounded-sm bg-[#f8f8f8] pl-1 pr-1">
              <Tool icon={<UserTile />} t="13907298339" caret="far" />
              <span className="ml-2">造价豆:0</span>
              <span className="ml-2 flex"><FaBell size={15} color="#2e8cf0" /></span>
              <span className="ml-auto flex"><More /></span>
            </div>
          </div>
        </div>
        <div className="flex h-[30px] items-center gap-[2px]">
          <Bar>
            <Tool icon={<NewFile />} label="新建" />
            <Tool icon={<OpenFile />} label="打开" caret="far" />
            <Tool icon={<Save />} label="保存" />
            <span className="h-6 w-px bg-[#b5b5b5]" />
            <Tool icon={<Undo />} label="撤销" caret="far" />
            <span className="ml-2 flex"><More /></span>
          </Bar>
          <div className="flex h-[28px] w-[549px] shrink-0 items-center gap-[7px] rounded-sm bg-gradient-to-b from-[#fbfbfb] to-[#f1f1f1] pl-[6px] pr-1">
            <Tool icon={<Paint />} t="绘图" />
            <Tool icon={<Sigma />} t="汇总计算" />
            <Tool icon={<Cloud />} t="云检查" />
            <Tool off icon={<AlignTop />} t="平齐板顶" />
            <Tool off icon={<Binoc />} t="查找图元" />
            <Tool off icon={<Glasses />} t="查看钢筋量" />
            <Tool off icon={<Batch />} t="批量选择" />
            <span className="ml-auto flex"><More /></span>
          </div>
          <Bar grow>
            <div className="-mr-1 flex h-[22px] shrink-0 items-center border border-[#666] px-[2px]"><Tool off icon={<Plane2D />} t="二维" caret="far" /></div>
            <Tool off icon={<Cube />} t="俯视" caret="far" />
            <Tool off icon={<Orbit />} t="动态观察" />
            <Tool off icon={<Local3D />} t="局部三维" />
            <Sep />
            <Tool off icon={<FullView />} t="全屏" />
            <Tool off icon={<Zoom />} t="缩放" caret="far" />
            <Tool off icon={<Pan />} t="平移" caret="far" />
            <Tool off icon={<Rotate />} t="屏幕旋转" caret="near" />
            <Sep />
            <Tool off icon={<PickFloor />} t="选择楼层" />
            <span className="ml-auto flex pr-px"><More /></span>
          </Bar>
        </div>
      </div>

      {/* workspace */}
      <main className="flex min-h-0 flex-1">
        <aside className="flex w-[229px] shrink-0 flex-col">
          <div className="mt-px flex h-[15px] shrink-0 items-center border border-[#888] pr-1">
            <h2 className="flex-1 whitespace-nowrap">模块导航栏</h2>
            <svg width="9" height="10" viewBox="0 0 9 10" fill="none" stroke="#000"><path d="M2.500.5h4v5h-4zM.5 5.500h8M4.500 5.500V10M5.500 1v4" /></svg>
            <svg width="9" height="9" viewBox="0 0 9 9" className="ml-[9px]"><path d="M1 1l7 7M8 1L1 8" stroke="#333" /></svg>
          </div>
          <div className="mt-px flex min-h-0 flex-1 flex-col">
            <button type="button" className={navBtn}>工程设置</button>
            <button type="button" className={navBtn}>绘图输入</button>
            <div className="mt-px flex min-h-0 flex-1 flex-col border-x-2 border-[#a5a5a5]">
              <div className="flex h-[27px] shrink-0 items-center gap-[7px] border-t border-[#c8c8c8] bg-gradient-to-b from-white to-[#f0f0f0] pl-1">
                <svg width="17" height="17" viewBox="0 0 17 17" stroke="#000"><path d="M4 .8h2V4h3v2h-3v3H4v-3H1V4h3zM11 7.500h2v3h3v2h-3v3h-2v-3h-3v-2h3z" fill="#0d9c94" /></svg>
                <svg width="17" height="17" viewBox="0 0 17 17" stroke="#000"><path d="M.5 4.500h8v2h-8zM8 10.500h8v2H8z" fill="#0d9c94" /></svg>
              </div>
              <div className="flex min-h-0 flex-1 overflow-hidden border-y border-[#888] bg-white">
                <ul className="min-w-0 flex-1 pt-px">{navNodes.map((n) => <NavRow key={n.t} n={n} />)}</ul>
                <div className="mr-[2px] flex w-[15px] flex-col bg-[#f0f0f0]">
                  <ScrollArrow up />
                  <div className="mt-[91px] h-[270px] bg-[#cdcdcd]" />
                  <span className="mt-auto flex"><ScrollArrow /></span>
                </div>
              </div>
            </div>
            <button type="button" className={navBtn + " mt-px"}>单构件输入</button>
            <button type="button" className={navBtn}>报表预览</button>
          </div>
        </aside>

        <div className="ml-[6px] flex min-w-0 flex-1 flex-col">
          <div className="flex h-[29px] shrink-0 items-end font-['Noto_Sans','Noto_Sans_CJK_SC',sans-serif]">
            <Bar grow>
              <Tool icon={<NewComp />} t="新建" caret="near" />
              <Tool icon={<Cross />} t="删除" />
              <Tool icon={<Copy />} t="复制" />
              <Tool icon={<Rename />} t="重命名" />
              <Sep />
              <div className="-ml-1 -mr-px flex items-center">
                <label htmlFor="floor" className="whitespace-nowrap">楼层</label>
                <select id="floor" className="ml-[6px] h-[22px] w-[48px] appearance-none bg-white pl-[2px]"><option>基础层</option></select>
                <span className="flex h-[22px] w-[11px] items-center justify-center bg-[#fafafa]"><Caret /></span>
              </div>
              <Sep />
              <div className="-ml-[2px] flex"><Tool icon={<SortAZ />} t="排序" caret="near" /></div>
              <Tool icon={<Filter />} t="过滤" caret="near" />
              <Sep />
              <Tool icon={<FloorCopy />} t="从其他楼层复制构件" />
              <Tool icon={<FloorCopy />} t="复制构件到其他楼层" />
              <Sep />
              <Tool t="查找" caret="near" />
              <Sep />
              <Tool off wide icon={<Arrow />} t="上移" />
              <Tool wide icon={<Arrow down />} t="下移" />
            </Bar>
          </div>

          <div className="flex min-h-0 flex-1">
            <section className="mt-1 flex w-[170px] shrink-0 flex-col border-r-2 border-[#888]">
              <div className="flex h-[26px] shrink-0">
                <input aria-label="搜索构件" placeholder="搜索构件..." className="min-w-0 flex-1 border border-[#777] bg-white px-[2px] outline-none placeholder:text-[#888]" />
                <span className="flex w-6 items-center justify-center bg-white"><svg width="14" height="14" viewBox="0 0 14 14" fill="none"><circle cx="8" cy="5.500" r="4.200" fill="#dff0fd" stroke="#53a8e4" strokeWidth="1.700" /><path d="M5 8.500L1 13" stroke="#3b8ed0" strokeWidth="2.200" /></svg></span>
              </div>
              <div className="flex-1 border-b border-l border-t border-[#777] bg-white pt-px">
                <div className="flex h-4 items-center pl-[7px]"><Chevron /><span className="mx-px w-[4px] border-t border-dotted border-gray-500" /><WallIcon /><span className="ml-1">剪力墙</span></div>
                {[1, 2, 3, 4, 5, 6, 7].map((i) => (
                  <div key={i} className="flex h-4 items-center">
                    <span className={i === 7 ? "ml-[31px] h-2 w-px self-start border-l border-dotted border-gray-500" : "ml-[31px] h-4 w-px border-l border-dotted border-gray-500"} />
                    <span className="w-2 border-t border-dotted border-gray-500" />
                    <span className={i === 1 ? "flex h-4 items-center gap-[7px] bg-[#316ac5] px-[3px] text-[11px]" : "flex h-4 items-center gap-[7px] px-[3px] text-[11px]"}><Gear />JLQ-{i}</span>
                  </div>
                ))}
              </div>
            </section>

            <section className="ml-[5px] flex min-w-0 flex-1 flex-col">
              <div className="flex h-5 shrink-0"><button type="button" className="z-10 w-[63px] border-l border-r border-t border-[#d5d5d5] bg-white text-center">属性编辑</button></div>
              <div className="mr-1 flex min-h-0 flex-1 flex-col border border-[#d5d5d5] bg-white p-[2px] pt-1">
                <div className="flex min-h-0 flex-1 overflow-hidden border border-[#a5a5a5]">
                  <div className="min-w-0 flex-1"><PropTable /></div>
                  <div className="mr-px flex w-[15px] flex-col bg-[#f0f0f0]">
                    <ScrollArrow up />
                    <div className="h-[346px] bg-[#cdcdcd]" />
                    <span className="mt-auto flex"><ScrollArrow /></span>
                  </div>
                </div>
              </div>
            </section>
          </div>
        </div>
      </main>

      {/* status bar */}
      <div className="flex h-[23px] shrink-0 items-end gap-[2px] pb-px">
        <span className={statusCell + " w-[148px]"} />
        <span className={statusCell + " w-[79px]"}>层高:3.55m</span>
        <span className={statusCell + " w-[98px]"}>底标高:-3.58m</span>
        <span className={statusCell + " w-[47px]"}>0</span>
        <span className={statusCell + " flex-1"}>在此处添加剪力墙构件的其他特殊设计的钢筋。</span>
      </div>

      <Taskbar />

      <Dialog />

      {/* input-method bar */}
      <div className="absolute bottom-10 right-0 flex h-[26px] items-center">
        <span className="z-10 flex"><SogouS s={28} /></span>
        <div className="-ml-2 flex h-6 items-center gap-2 border border-[#b8cce0] bg-white pl-3 pr-1 text-[#1f74cc]">
          <b className="text-[14px]">中</b>
          <svg width="12" height="12" viewBox="0 0 12 12" fill="none" stroke="#1f74cc"><circle cx="2.500" cy="3" r="1.700" strokeWidth="1.300" /><path d="M8 6h3v2.500L9 11.500H7.500L9 8.500H8z" fill="#1f74cc" stroke="none" /></svg>
          <FaMicrophone size={15} />
          <FaKeyboard size={16} />
          <span className="relative flex"><FaUserAlt size={13} color="#a9bdd6" /><span className="absolute -bottom-1 left-[6px] text-[8px] font-bold leading-[10px] text-[#6f88a8]">17</span></span>
          <FaTshirt size={15} />
          <FaWrench size={14} />
        </div>
      </div>

      {/* floating speed ball */}
      <div className="absolute left-[949px] top-[-29px] flex size-[47px] items-end justify-center rounded-full border-2 border-[#e4e4e4] bg-[#35bd5b] pb-px text-[12px] font-bold text-white shadow-[0_1px_5px_rgba(0,0,0,0.5)]">69</div>

      {/* markup */}
      <svg width="312" height="76" viewBox="0 0 312 76" className="pointer-events-none absolute left-[362px] top-[284px]"><ellipse cx="155" cy="38" rx="150" ry="30.500" fill="none" stroke="#f00" strokeWidth="7" /></svg>
      <svg width="90" height="75" viewBox="0 0 90 75" className="pointer-events-none absolute left-[893px] top-[255px]"><path d="M8 71L64 23" stroke="#f00" strokeWidth="7" strokeLinecap="round" /><path d="M81 8L52 20l10 1 4 10-1 2 6-2z" fill="#f00" stroke="#f00" strokeWidth="5" strokeLinejoin="round" /></svg>
      <p className="pointer-events-none absolute left-[816px] top-[330px] whitespace-nowrap text-[23px] leading-7 text-[#f00]">按照图纸计算输入</p>
    </div>
  );
}
